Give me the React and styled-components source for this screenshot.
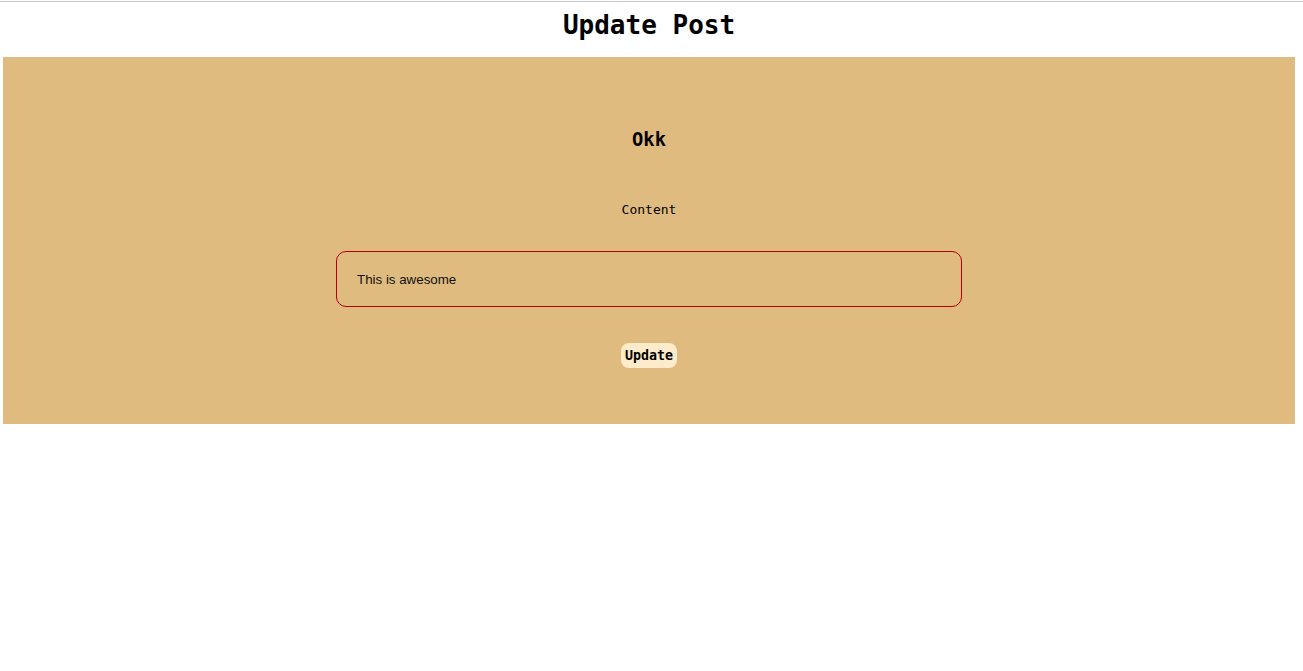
import React from 'react';
import styled, { createGlobalStyle } from 'styled-components';

const GlobalStyle = createGlobalStyle`
  body {
    margin: 0;
    background: #fff;
    font-family: "DejaVu Sans Mono", monospace;
  }
`;

const Page = styled.div`
  border-top: 1px solid #c6c6c6;
  margin-top: 1px;
  padding: 0 8px 0 3px;
`;

const Title = styled.h1`
  margin: 0;
  padding: 8px 0 17px;
  font-size: 26px;
  line-height: 30px;
  text-align: center;
  color: #000;
`;

const Panel = styled.form`
  background: #e0bb80;
  display: flex;
  flex-direction: column;
  align-items: center;
  padding: 72px 0 56px;
`;

const PostTitle = styled.h3`
  margin: 0 0 51px;
  font-size: 18.72px;
  line-height: 22px;
  color: #000;
`;

const Label = styled.label`
  font-size: 13px;
  line-height: 15px;
  color: #000;
  margin-bottom: 34px;
`;

const ContentInput = styled.input`
  box-sizing: border-box;
  width: 626px;
  height: 56px;
  padding: 0 20px;
  border: 1px solid #b30000;
  border-radius: 10px;
  background: transparent;
  font-family: "Liberation Sans", Arial, sans-serif;
  font-size: 13.33px;
  color: #111;
  outline: none;
  margin-bottom: 36px;
`;

const Button = styled.button`
  box-sizing: border-box;
  height: 25px;
  padding: 0 4px;
  border: none;
  border-radius: 8px;
  background: #fdebc9;
  font-family: "DejaVu Sans Mono", monospace;
  font-weight: 700;
  font-size: 13.33px;
  color: #000;
  cursor: pointer;
`;

export default function App() {
  return (
    <>
      <GlobalStyle />
      <Page>
        <Title>Update Post</Title>
        <Panel onSubmit={e => e.preventDefault()}>
          <PostTitle>Okk</PostTitle>
          <Label htmlFor="content">Content</Label>
          <ContentInput id="content" defaultValue="This is awesome" />
          <Button type="submit">Update</Button>
        </Panel>
      </Page>
    </>
  );
}
